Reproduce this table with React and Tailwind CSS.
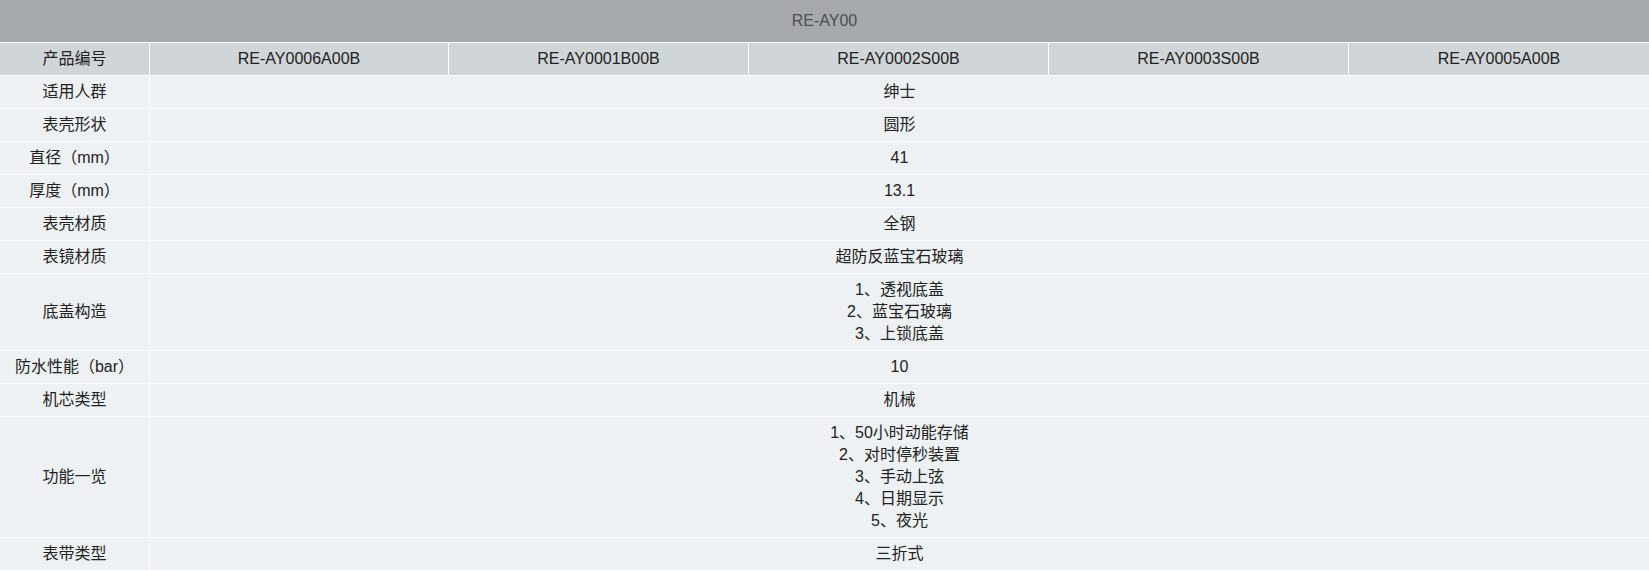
import React from 'react';

const models = ['RE-AY0006A00B', 'RE-AY0001B00B', 'RE-AY0002S00B', 'RE-AY0003S00B', 'RE-AY0005A00B'];

const specs = [
  { label: '适用人群', value: ['绅士'] },
  { label: '表壳形状', value: ['圆形'] },
  { label: '直径（mm）', value: ['41'] },
  { label: '厚度（mm）', value: ['13.1'] },
  { label: '表壳材质', value: ['全钢'] },
  { label: '表镜材质', value: ['超防反蓝宝石玻璃'] },
  { label: '底盖构造', value: ['1、透视底盖', '2、蓝宝石玻璃', '3、上锁底盖'] },
  { label: '防水性能（bar）', value: ['10'] },
  { label: '机芯类型', value: ['机械'] },
  { label: '功能一览', value: ['1、50小时动能存储', '2、对时停秒装置', '3、手动上弦', '4、日期显示', '5、夜光'] },
  { label: '表带类型', value: ['三折式'] },
];

const cell = 'flex flex-col items-center justify-center text-center py-[5px] leading-[22px]';

export default function App() {
  return (
    <div
      className="w-full bg-white text-[16px] text-[#222]"
      style={{ fontFamily: '"Liberation Sans", Arial, "Noto Sans CJK SC", sans-serif' }}
    >
      <div className="grid grid-cols-[149px_298px_299px_299px_299px_1fr] gap-px bg-white">
        <div className={`${cell} col-span-6 h-[42px] bg-[#a5a9ac] text-[#4d4f51]`}>RE-AY00</div>

        <div className={`${cell} bg-[#d0d5d8]`}>产品编号</div>
        {models.map((m) => (
          <div key={m} className={`${cell} bg-[#d0d5d8]`}>{m}</div>
        ))}

        {specs.map((row) => (
          <React.Fragment key={row.label}>
            <div className={`${cell} bg-[#edf1f4]`}>{row.label}</div>
            <div className={`${cell} col-span-5 bg-[#edf1f4]`}>
              {row.value.map((line) => (
                <div key={line}>{line}</div>
              ))}
            </div>
          </React.Fragment>
        ))}
      </div>
    </div>
  );
}
